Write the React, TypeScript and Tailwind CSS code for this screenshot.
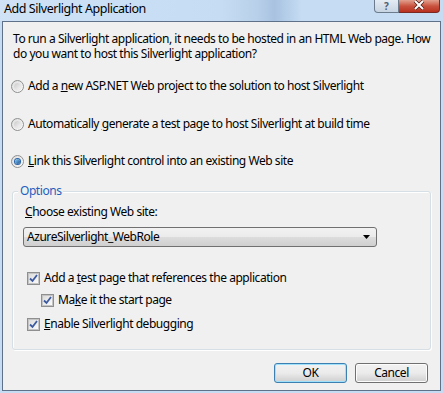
const Radio = ({ checked }: { checked?: boolean }) => (
  <span className="relative flex h-[13px] w-[13px] shrink-0 items-center justify-center rounded-full border border-[#8e8f8f] bg-gradient-to-br from-[#dcdcdc] to-[#ffffff]">
    <span className="h-[9px] w-[9px] rounded-full border border-[#e8e8e8] bg-gradient-to-br from-[#cbcbcb] to-[#f6f6f6]" />
    {checked && (
      <span className="absolute left-[3px] top-[3px] h-[5px] w-[5px] rounded-full bg-gradient-to-br from-[#8ad3f5] to-[#1d4f94] ring-1 ring-[#2b63a6]" />
    )}
  </span>
);

const Check = () => (
  <span className="flex h-[13px] w-[13px] shrink-0 items-center justify-center border border-[#8e8f8f] bg-white">
    <span className="flex h-[11px] w-[11px] items-center justify-center border border-[#c4c4c4] bg-gradient-to-br from-[#dcdcdc] to-[#fbfbfb]">
      <svg width="9" height="9" viewBox="0 0 9 9">
        <path d="M1 4.5 L3.5 7 L8 1" fill="none" stroke="#3b5aa0" strokeWidth="1.8" />
      </svg>
    </span>
  </span>
);

const Btn = ({ label, def }: { label: string; def?: boolean }) => (
  <button
    className={
      def
        ? "flex h-[20px] w-[73px] items-center justify-center rounded-[3px] border border-[#3c7fb1] bg-gradient-to-b from-[#f2f2f2] via-[#ebebeb] to-[#cfcfcf] text-[12px] text-black shadow-[inset_0_0_0_1px_#9fe0fb]"
        : "flex h-[20px] w-[73px] items-center justify-center rounded-[3px] border border-[#707070] bg-gradient-to-b from-[#f2f2f2] via-[#ebebeb] to-[#cfcfcf] text-[12px] text-black shadow-[inset_0_0_0_1px_#fcfcfc]"
    }
  >
    {label}
  </button>
);

export default function App() {
  return (
    <div className="flex h-[393px] w-[443px] flex-col bg-[#c6dcf3] font-['Noto_Sans',sans-serif] text-[12px] tracking-[-0.45px] text-black">
      {/* title bar */}
      <div className="flex h-[21px] items-start bg-[linear-gradient(90deg,#cfe2f6_0%,#c5dcf3_50%,#b9d0ea_58%,#a8c2e0_62%,#c5dcf3_68%,#c5dcf3_100%)] pl-[4px]">
        <span className="mt-[1px] text-[12.5px] leading-[16px]">Add Silverlight Application</span>
        <div className="ml-auto mr-[3px] flex">
          <div className="flex h-[13px] w-[25px] items-center justify-center rounded-bl-[4px] border border-t-0 border-[#6d7c8c] bg-gradient-to-b from-[#e4ebf3] to-[#c7d4e2] text-[10px] leading-[12px] font-bold tracking-normal text-[#4d5e72]">
            ?
          </div>
          <div className="flex h-[13px] w-[41px] items-start justify-center rounded-br-[4px] border border-l-0 border-t-0 border-[#7a2a22] bg-gradient-to-b from-[#e1a08f] via-[#c9533f] to-[#b8301f]">
            <svg width="12" height="10" viewBox="0 0 12 10">
              <path d="M2 1 L10 9 M10 1 L2 9" stroke="#4a1a14" strokeWidth="3.4" />
              <path d="M2 1 L10 9 M10 1 L2 9" stroke="#ffffff" strokeWidth="2" />
            </svg>
          </div>
        </div>
      </div>

      {/* client */}
      <div className="mx-[2px] mb-[2px] flex flex-1 flex-col border border-[#5f7188] bg-[#f0f0f0]">
        <p className="mt-[9px] pl-[10px] pr-0 leading-[15px]">
          To run a Silverlight application, it needs to be hosted in an HTML Web page. How do you want to host this Silverlight application?
        </p>

        <div className="mt-[16px] flex items-center gap-[4px] pl-[8px]">
          <Radio />
          <span>
            Add a <u>n</u>ew ASP.NET Web project to the solution to host Silverlight
          </span>
        </div>
        <div className="mt-[20px] flex items-center gap-[4px] pl-[8px]">
          <Radio />
          <span>
            Automatically <u>g</u>enerate a test page to host Silverlight at build time
          </span>
        </div>
        <div className="mt-[19px] flex items-center gap-[4px] pl-[8px]">
          <Radio checked />
          <span>
            <u>L</u>ink this Silverlight control into an existing Web site
          </span>
        </div>

        {/* options group */}
        <div className="relative mx-[9px] mt-[21px] flex h-[159px] flex-col rounded-[3px] border border-[#d5dfe5] shadow-[inset_1px_1px_0_#ffffff,1px_1px_0_#ffffff]">
          <span className="absolute -top-[9px] left-[5px] bg-[#f0f0f0] px-[2px] leading-[16px] text-[#1f5fbf]">
            Options
          </span>
          <span className="mt-[12px] pl-[12px] leading-[16px]">
            <u>C</u>hoose existing Web site:
          </span>
          <div className="ml-[10px] mt-[7px] flex h-[20px] w-[354px] items-center rounded-[3px] border border-[#707070] bg-[linear-gradient(#f2f2f2_0%,#ebebeb_50%,#dddddd_50%,#cfcfcf_100%)] pl-[3px] pr-[6px]">
            <span>AzureSilverlight_WebRole</span>
            <svg className="ml-auto" width="7" height="4" viewBox="0 0 7 4">
              <path d="M0 0 H7 L3.5 4 Z" fill="#000" />
            </svg>
          </div>

          <div className="ml-[14px] mt-[22px] flex items-center gap-[4px]">
            <Check />
            <span>
              Add a <u>t</u>est page that references the application
            </span>
          </div>
          <div className="ml-[28px] mt-[4px] flex items-center gap-[4px]">
            <Check />
            <span>
              Ma<u>k</u>e it the start page
            </span>
          </div>
          <div className="ml-[14px] mt-[6px] flex items-center gap-[4px]">
            <Check />
            <span>
              <u>E</u>nable Silverlight debugging
            </span>
          </div>
        </div>

        <div className="mr-[12px] mt-[13px] flex justify-end gap-[8px]">
          <Btn label="OK" def />
          <Btn label="Cancel" />
        </div>
      </div>
    </div>
  );
}
